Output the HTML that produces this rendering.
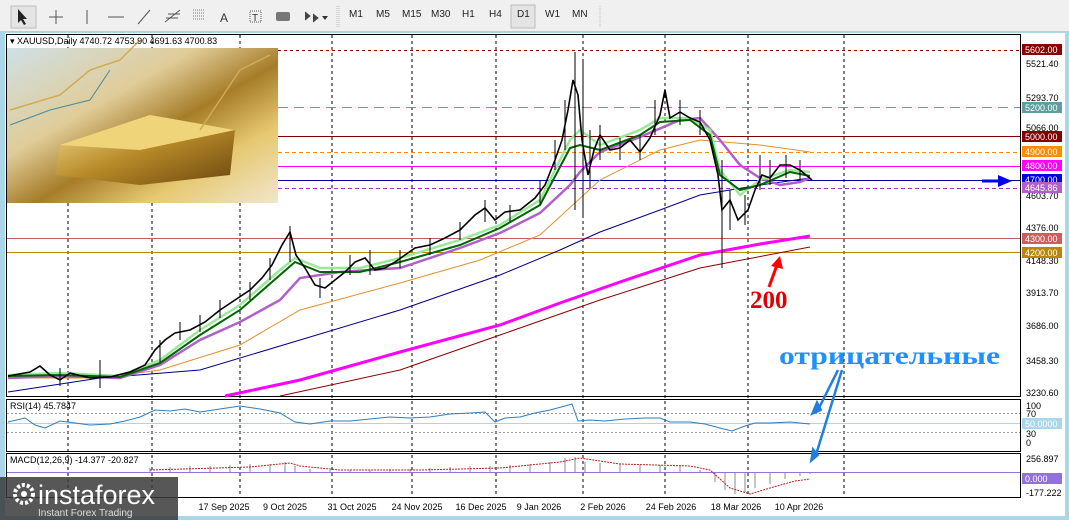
<!DOCTYPE html>
<html><head><meta charset="utf-8"><style>
body{margin:0;width:1069px;height:520px;overflow:hidden;background:#a9d7e8;font-family:"Liberation Sans",sans-serif}
.tb{position:absolute;left:0;top:0;width:1069px;height:31px;background:#f0f0f0;border-bottom:1px solid #c8c8c8}
.tb span{position:absolute;top:9px;font-size:10px;color:#222}
</style></head><body>
<div class="tb">
<svg width="1069" height="31" style="position:absolute;left:0;top:0">
<rect x="11" y="6" width="25" height="22" fill="#e4e4e4" stroke="#bbb"/>
<path d="M18 9 L18 23 L21 20 L24 25 L26 24 L23 19 L27 19 Z" fill="#222"/>
<path d="M49 17 H63 M56 10 V24" stroke="#555"/>
<path d="M87 10 V24 M108 17 H124 M138 24 L150 10" stroke="#555"/>
<path d="M165 22 L180 10 M168 14 H180 M166 18 H178" stroke="#555"/>
<path d="M193 10 H205 M193 13 H205 M193 16 H205 M193 19 H205" stroke="#777" stroke-dasharray="1 1"/>
<text x="220" y="22" font-size="12" fill="#333">A</text>
<rect x="250" y="11" width="11" height="11" fill="none" stroke="#555" stroke-dasharray="1 1"/><text x="252" y="21" font-size="10" fill="#333">T</text>
<rect x="276" y="12" width="14" height="9" rx="2" fill="#777"/>
<path d="M305 12 L310 16 L305 20 M313 14 L318 18 L313 22" fill="#444" stroke="#444"/><path d="M322 16 L328 16 L325 20Z" fill="#333"/>
<path d="M337 6 V28 M339 6 V28" stroke="#bbb" stroke-dasharray="1 1"/>
<rect x="511" y="5" width="24" height="23" fill="#e4e4e4" stroke="#bbb"/>
<path d="M600 6 V28" stroke="#bbb" stroke-dasharray="1 1"/>
</svg>
<span style="left:349px">M1</span><span style="left:376px">M5</span><span style="left:402px">M15</span><span style="left:431px">M30</span><span style="left:462px">H1</span><span style="left:489px">H4</span><span style="left:517px">D1</span><span style="left:545px">W1</span><span style="left:572px">MN</span>
</div>
<svg width="1069" height="520" style="position:absolute;left:0;top:0" font-family="Liberation Sans,sans-serif">
<rect x="5" y="33" width="1060" height="483" fill="#fff"/>
<defs><linearGradient id="g" x1="0" y1="0" x2="1" y2="1"><stop offset="0" stop-color="#cfe0e6"/><stop offset=".35" stop-color="#e0cc98"/><stop offset=".55" stop-color="#a67c28"/><stop offset=".75" stop-color="#e6c870"/><stop offset="1" stop-color="#f1e6cc"/></linearGradient>
<linearGradient id="b" x1="0" y1="0" x2="1" y2="1"><stop offset="0" stop-color="#f8e49a"/><stop offset=".5" stop-color="#b88a28"/><stop offset="1" stop-color="#6a4810"/></linearGradient></defs>
<rect x="6.5" y="34.5" width="1014" height="362" fill="none" stroke="#000"/>
<rect x="6.5" y="399.5" width="1014" height="52" fill="none" stroke="#000"/>
<rect x="6.5" y="453.5" width="1014" height="44" fill="none" stroke="#000"/>
<g stroke="#000" stroke-dasharray="3 3"><path d="M68 35V497M152 35V497M240 35V497M332 35V497M412 35V497M496 35V497M583 35V497M665 35V497M748 35V497M844 35V497"/></g>
<rect x="7" y="48" width="271" height="155" fill="url(#g)"/>
<path d="M60 145 L150 115 L235 130 L230 175 L140 185 L55 175Z" fill="url(#b)"/>
<path d="M60 145 L150 115 L235 130 L140 150Z" fill="#f0d47a"/>
<path d="M10 110 L60 95 L90 70 L120 60 L140 40 M200 130 L240 70 L270 55" stroke="#d4aa50" fill="none" stroke-width="1.5"/>
<path d="M10 125 L50 110 L90 100 L110 70" stroke="#4a8a9a" fill="none"/>
<path d="M278 50.5H1020" stroke="#8b0000" stroke-dasharray="3 3"/>
<path d="M278 107.5H1020" stroke="#5f9ea0" stroke-dasharray="10 6"/>
<path d="M278 136.5H1020" stroke="#800000"/>
<path d="M278 152.5H1020" stroke="#ff8c00" stroke-dasharray="4 3"/>
<path d="M278 166.5H1020" stroke="#ff00ff"/>
<path d="M278 180.5H1020" stroke="#0000a0"/>
<path d="M278 188.5H1020" stroke="#9932cc" stroke-dasharray="4 3"/>
<path d="M7 238.5H1020" stroke="#c06060"/>
<path d="M7 252.5H1020" stroke="#b8860b"/>
<polyline fill="none" stroke="#8b0000" stroke-width="1" points="280,396 400,370 500,335 600,300 700,268 810,247"/>
<polyline fill="none" stroke="#ff00ff" stroke-width="3" points="225,396 300,380 400,352 500,325 560,303 620,282 700,255 760,244 810,236"/>
<polyline fill="none" stroke="#00008b" stroke-width="1" points="8,392 100,378 200,370 300,340 400,310 500,275 560,250 600,232 660,210 700,195 760,185 810,178"/>
<polyline fill="none" stroke="#e09030" stroke-width="1" points="8,378 100,378 160,370 240,345 300,310 400,283 480,260 540,235 600,180 660,150 700,140 760,145 810,152"/>
<polyline fill="none" stroke="#b060c8" stroke-width="2.5" points="8,378 60,376 120,378 160,365 200,340 240,322 280,300 300,278 340,272 400,268 460,248 500,233 540,213 570,185 580,172 600,152 640,137 680,120 700,118 720,140 740,165 760,178 780,185 800,182 810,178"/>
<polyline fill="none" stroke="#9be89b" stroke-width="2.5" points="8,375 60,373 120,376 160,360 200,330 240,305 280,270 295,258 320,268 360,268 400,258 460,240 500,225 540,200 570,140 580,130 600,145 640,130 660,118 690,118 710,130 720,170 740,195 760,180 790,170 810,172"/>
<polyline fill="none" stroke="#006400" stroke-width="2" points="8,376 60,375 120,377 160,363 200,335 240,310 280,275 295,262 320,272 360,272 400,262 460,245 500,228 540,205 570,148 580,145 600,150 640,135 660,122 690,120 710,135 720,175 740,190 760,185 790,172 810,176"/>
<polyline fill="none" stroke="#000" stroke-width="1.6" points="8,376 30,372 40,366 50,375 60,380 70,373 90,378 110,377 130,372 145,365 155,350 165,340 175,333 190,330 205,322 220,310 235,300 250,290 262,278 272,265 282,245 290,232 296,255 305,268 315,285 325,288 335,280 345,272 355,262 365,258 375,270 385,268 395,262 405,255 415,248 430,245 445,238 460,230 475,215 485,208 495,220 505,212 520,210 535,198 545,185 555,160 562,140 568,110 573,80 578,95 582,140 588,175 594,150 600,135 610,150 620,148 630,140 640,152 650,138 660,115 665,90 670,118 680,112 690,118 700,122 710,140 718,175 722,210 730,200 738,220 748,210 755,190 762,175 770,178 780,165 790,165 800,170 812,180"/>
<g stroke="#000"><path d="M575 52V210M583 60V215M590 130V188M290 226V262M722 160V268M760 155V190M786 155V178M100 360V388M60 368V386M320 278V298M160 340V362M180 322V340M200 315V332M220 300V318M250 282V300M270 258V280M350 255V275M370 250V275M400 250V268M430 238V255M460 222V240M485 200V222M510 205V222M540 180V205M555 140V170M565 100V150M600 125V160M620 138V160M640 135V160M655 100V135M680 100V125M700 110V135M730 190V230M745 195V225M770 160V185M800 160V180"/></g>
<g font-size="9" fill="#000"><text x="1026" y="67">5521.40</text><text x="1026" y="101">5293.70</text><text x="1026" y="131">5066.00</text><text x="1026" y="199">4603.70</text><text x="1026" y="231">4376.00</text><text x="1026" y="264">4148.30</text><text x="1026" y="296">3913.70</text><text x="1026" y="329">3686.00</text><text x="1026" y="364">3458.30</text><text x="1026" y="396">3230.60</text>
<text x="1026" y="409">100</text><text x="1026" y="417">70</text><text x="1026" y="437">30</text><text x="1026" y="446">0</text>
<text x="1026" y="462">256.897</text><text x="1026" y="496">-177.222</text></g>
<g font-size="9" fill="#fff">
<rect x="1022" y="44" width="40" height="11" fill="#8b0000"/><text x="1025" y="53">5602.00</text>
<rect x="1022" y="102" width="40" height="11" fill="#5f9ea0"/><text x="1025" y="111">5200.00</text>
<rect x="1022" y="131" width="40" height="11" fill="#800000"/><text x="1025" y="140">5000.00</text>
<rect x="1022" y="146" width="40" height="11" fill="#ff8c00"/><text x="1025" y="155">4900.00</text>
<rect x="1022" y="160" width="40" height="11" fill="#ff00ff"/><text x="1025" y="169">4800.00</text>
<rect x="1022" y="174" width="40" height="11" fill="#0000e0"/><text x="1025" y="183">4700.00</text>
<rect x="1022" y="182" width="40" height="11" fill="#b060c8"/><text x="1025" y="191">4645.86</text>
<rect x="1022" y="233" width="40" height="11" fill="#cd5c5c"/><text x="1025" y="242">4300.00</text>
<rect x="1022" y="247" width="40" height="11" fill="#b8860b"/><text x="1025" y="256">4200.00</text>
<rect x="1022" y="418" width="40" height="11" fill="#a9d7e8"/><text x="1025" y="427">50.0000</text>
<rect x="1022" y="473" width="40" height="11" fill="#9370db"/><text x="1025" y="482">0.000</text>
</g>
<text x="10" y="44" font-size="9" fill="#000">▾ XAUUSD,Daily  4740.72 4753.90 4691.63 4700.83</text>
<path d="M7 413.5H1020M7 432.5H1020" stroke="#999" stroke-dasharray="2 2"/>
<path d="M7 423.5H1020" stroke="#a9d7e8"/>
<polyline fill="none" stroke="#2e7fbf" points="8,422 25,418 35,425 45,428 60,421 75,423 90,425 110,424 125,421 140,417 155,410 170,411 185,409 200,412 220,409 240,406 260,409 280,413 295,422 310,424 330,421 350,421 370,419 390,417 410,418 430,417 450,414 470,413 485,412 495,422 505,418 520,417 535,413 550,410 565,406 572,404 578,421 590,420 605,421 625,419 645,418 660,418 670,422 690,422 705,424 720,428 732,431 745,426 755,423 770,423 790,422 810,424"/>
<text x="10" y="409" font-size="9">RSI(14) 45.7847</text>
<path d="M7 472.5H1020" stroke="#9370db"/>
<g stroke="#888"><path d="M150 472V468M170 472V467M190 472V466M210 472V466M230 472V465M250 472V464M270 472V464M285 472V462M295 472V466M310 472V469M330 472V470M350 472V470M370 472V470M390 472V469M410 472V469M430 472V468M450 472V467M470 472V466M490 472V466M510 472V465M530 472V464M550 472V462M565 472V458M575 472V457M585 472V462M600 472V463M620 472V464M640 472V465M660 472V465M680 472V466M700 472V470M715 472V482M725 472V490M735 472V494M745 472V492M755 472V488M770 472V484M785 472V479M800 472V476M810 472V474"/></g>
<polyline fill="none" stroke="#b22222" stroke-dasharray="2 1" points="150,470 250,467 290,463 300,466 340,470 420,470 500,468 560,462 580,458 620,464 690,466 710,470 730,488 750,494 770,488 795,481 810,479"/>
<text x="10" y="463" font-size="9">MACD(12,26,9) -14.377 -20.827</text>
<g font-size="9" fill="#000" text-anchor="middle"><text x="224" y="510">17 Sep 2025</text><text x="285" y="510">9 Oct 2025</text><text x="352" y="510">31 Oct 2025</text><text x="417" y="510">24 Nov 2025</text><text x="481" y="510">16 Dec 2025</text><text x="539" y="510">9 Jan 2026</text><text x="603" y="510">2 Feb 2026</text><text x="671" y="510">24 Feb 2026</text><text x="736" y="510">18 Mar 2026</text><text x="799" y="510">10 Apr 2026</text></g>
<path d="M982 181H1000" stroke="#0000ff" stroke-width="3"/><path d="M998 175L1012 181L998 187Z" fill="#0000ff"/>
<path d="M769 287L777 265" stroke="#ff0000" stroke-width="3"/><path d="M771 266L780 256L783 269Z" fill="#ff0000"/>
<text x="750" y="308" font-family="Liberation Serif,serif" font-weight="bold" font-size="25" fill="#e00000">200</text>
<text x="779" y="364" font-family="Liberation Serif,serif" font-weight="bold" font-size="25" fill="#1e90ff" textLength="221" lengthAdjust="spacingAndGlyphs">отрицательные</text>
<g stroke="#1e7fe0" stroke-width="2.5"><path d="M838 370L817 412M842 370L815 458"/></g>
<path d="M812 414L817 402L821 410Z M811 461L813 449L818 455Z" fill="#1e7fe0" stroke="#1e7fe0" stroke-width="2"/>
<rect x="0" y="477" width="178" height="43" fill="#3a3a3a" opacity=".85"/>
<circle cx="24" cy="494" r="9" fill="none" stroke="#fff" stroke-width="4" stroke-dasharray="3 2"/><circle cx="24" cy="494" r="3" fill="#fff"/>
<text x="38" y="504" font-size="27" fill="#fff">instaforex</text>
<text x="38" y="516" font-size="10" fill="#ddd">Instant Forex Trading</text>
</svg>
</body></html>
